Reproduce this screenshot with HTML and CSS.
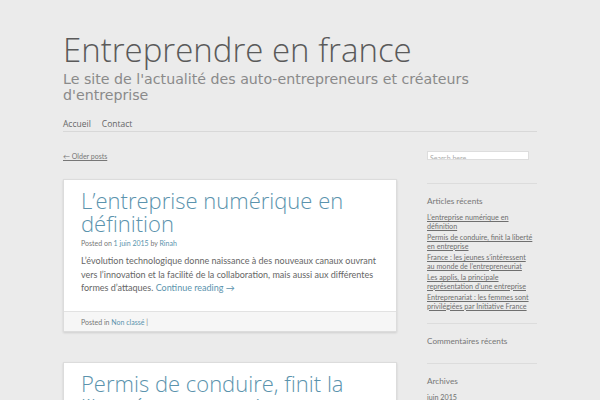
FILE: index.html
```html
<!DOCTYPE html>
<html lang="fr">
<head>
<meta charset="utf-8">
<title>Entreprendre en france</title>
<link rel="stylesheet" href="styles.css">
</head>
<body>
<div class="page">
  <header class="site-header">
    <h1 class="site-title">Entreprendre en france</h1>
    <p class="site-desc">Le site de l'actualité des auto-entrepreneurs et créateurs d'entreprise</p>
    <nav class="menu">
      <a href="#">Accueil</a>
      <a href="#">Contact</a>
    </nav>
  </header>
  <div class="layout">
    <main class="content">
      <div class="older"><a href="#">← Older posts</a></div>
      <article class="post">
        <div class="post-body">
          <h2 class="post-title">L’entreprise numérique en définition</h2>
          <div class="meta">Posted on <a href="#">1 juin 2015</a> by <a href="#">Rinah</a></div>
          <p class="excerpt">L’évolution technologique donne naissance à des nouveaux canaux ouvrant vers l’innovation et la facilité de la collaboration, mais aussi aux différentes formes d’attaques. <a href="#">Continue reading →</a></p>
        </div>
        <footer class="post-foot">Posted in <a href="#">Non classé</a> |</footer>
      </article>
      <article class="post">
        <div class="post-body">
          <h2 class="post-title">Permis de conduire, finit la liberté en entreprise</h2>
        </div>
      </article>
    </main>
    <aside class="sidebar">
      <div class="search"><span>Search here...</span></div>
      <section class="widget">
        <h3>Articles récents</h3>
        <ul>
          <li><a href="#">L’entreprise numérique en définition</a></li>
          <li><a href="#">Permis de conduire, finit la liberté en entreprise</a></li>
          <li><a href="#">France : les jeunes s’intéressent au monde de l’entrepreneuriat</a></li>
          <li><a href="#">Les applis, la principale représentation d’une entreprise</a></li>
          <li><a href="#">Entreprenariat : les femmes sont privilégiées par Initiative France</a></li>
        </ul>
      </section>
      <section class="widget">
        <h3>Commentaires récents</h3>
      </section>
      <section class="widget">
        <h3>Archives</h3>
        <ul>
          <li><a href="#">juin 2015</a></li>
        </ul>
      </section>
    </aside>
  </div>
</div>
</body>
</html>
```
FILE: styles.css
```css
html, body {
  margin: 0;
  padding: 0;
  background: #ebebeb;
  height: 100%;
  overflow: hidden;
}
body {
  font-family: Lato, "Open Sans", sans-serif;
  color: #666;
}
a { color: inherit; }
.page {
  margin-left: 63px;
  width: 474px;
  padding-top: 31px;
}
.site-title {
  margin: 0;
  font-family: "Open Sans", sans-serif;
  font-weight: 300;
  font-size: 33px;
  line-height: 38px;
  color: #5a5a5a;
}
.site-desc {
  margin: 2px 0 0;
  font-family: "DejaVu Sans", sans-serif;
  font-size: 14.2px;
  line-height: 16px;
  color: #8a8a8a;
  width: 440px;
}
.menu {
  margin-top: 15px;
  padding-bottom: 1px;
  border-bottom: 1px solid #d8d8d8;
  display: flex;
  gap: 11px;
  font-family: "Open Sans", sans-serif;
  font-size: 8.5px;
  line-height: 12px;
}
.menu a {
  text-decoration: none;
  color: #666;
}
.layout {
  display: flex;
  align-items: flex-start;
}
.content {
  width: 334px;
}
.older {
  margin-top: 19px;
  font-size: 7px;
  line-height: 10px;
}
.older a { color: #777; }
.post {
  margin-top: 18px;
  background: #fff;
  border: 1px solid #dcdcdc;
  box-shadow: 0 1px 2px rgba(0,0,0,0.12);
}
.post + .post { margin-top: 30px; }
.post-body {
  padding: 9px 18px 16px 17px;
}
.post-title {
  margin: 0;
  font-family: "Open Sans", sans-serif;
  font-weight: 300;
  font-size: 22px;
  line-height: 23px;
  color: #5b93ad;
}
.meta {
  font-size: 7px;
  line-height: 10px;
  color: #777;
  margin-top: 3px;
}
.meta a, .post-foot a, .excerpt a { color: #5b93ad; text-decoration: none; }
.excerpt {
  margin: 6px 0 0;
  font-size: 9px;
  line-height: 13.5px;
  color: #666;
}
.post-foot {
  background: #f6f6f6;
  border-top: 1px solid #e2e2e2;
  padding: 6px 17px 5px;
  font-size: 7px;
  line-height: 8px;
  color: #777;
}
.sidebar {
  margin-left: 30px;
  width: 110px;
  padding-top: 19px;
}
.search {
  width: 98px;
  height: 7px;
  background: #fff;
  border: 1px solid #ddd;
  overflow: hidden;
  font-size: 7px;
  line-height: 12px;
  color: #aaa;
  padding-left: 2px;
}
.widget {
  border-top: 1px solid #dcdcdc;
  padding: 12px 0 17px;
}
.search + .widget { margin-top: 23px; }
.widget h3 {
  margin: 0;
  font-weight: 400;
  font-size: 8.2px;
  line-height: 10px;
  color: #777;
}
.widget ul {
  list-style: none;
  margin: 8px 0 -8px;
  padding: 0;
}
.widget li {
  font-size: 7.2px;
  line-height: 8.5px;
  margin-bottom: 3px;
  padding-right: 3px;
}
.widget li a { color: #6f6f6f; }
```
